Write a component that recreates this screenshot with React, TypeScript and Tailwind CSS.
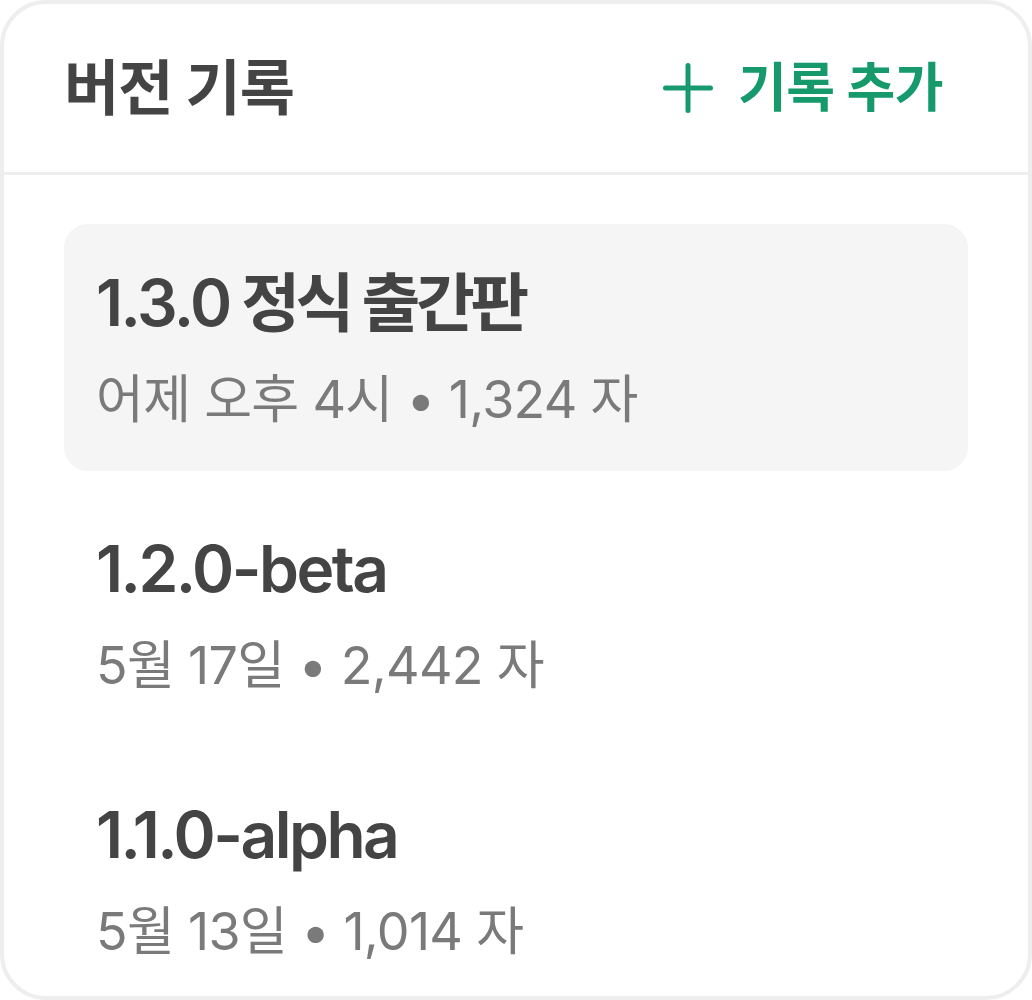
import React from "react";

const items = [
  { title: "1.3.0", ko: "정식 출간판", meta: "어제 오후 4시 • 1,324 자", active: true },
  { title: "1.2.0-beta", ko: "", meta: "5월 17일 • 2,442 자", active: false },
  { title: "1.1.0-alpha", ko: "", meta: "5월 13일 • 1,014 자", active: false },
];

export default function App() {
  return (
    <div
      className="w-[1032px] h-[1000px] bg-white"
      style={{ fontFamily: 'Inter, "Noto Sans CJK KR", sans-serif' }}
    >
      <div className="h-[1000px] border-[4px] border-[#eeeeee] rounded-[46px] overflow-hidden flex flex-col bg-white">
        <div className="h-[171px] shrink-0 flex items-center justify-between pl-[60px] pr-[57px] border-b-[3px] border-[#eeeeee]">
          <h1 className="text-[60px] font-bold text-[#444444] leading-none tracking-[-1px]">버전 기록</h1>
          <button className="flex items-center gap-[25px] px-[28px] py-[10px] text-[#169a6c]">
            <svg width="50" height="50" viewBox="0 0 50 50" fill="none">
              <path d="M2.5 25h45M25 2.5v45" stroke="#169a6c" strokeWidth="5" strokeLinecap="round" />
            </svg>
            <span className="text-[53px] font-bold leading-none tracking-[-0.5px]">기록 추가</span>
          </button>
        </div>
        <div className="flex flex-col gap-[19px] px-[60px] pt-[49px]">
          {items.map((it) => (
            <div
              key={it.title}
              className={
                "rounded-[24px] px-[32px] pt-[31px] pb-[32px] " +
                (it.active ? "bg-[#f5f5f5]" : "bg-white")
              }
            >
              <div className="text-[64px] font-semibold leading-[96px] text-[#444444] tracking-[-2.5px]">
                {it.title}
                {it.ko ? <span className="tracking-[-4.5px]"> {it.ko}</span> : null}
              </div>
              <div className="mt-[10px] text-[52px] leading-[78px] text-[#7a7a7a] tracking-[-0.7px]">
                {it.meta}
              </div>
            </div>
          ))}
        </div>
      </div>
    </div>
  );
}
